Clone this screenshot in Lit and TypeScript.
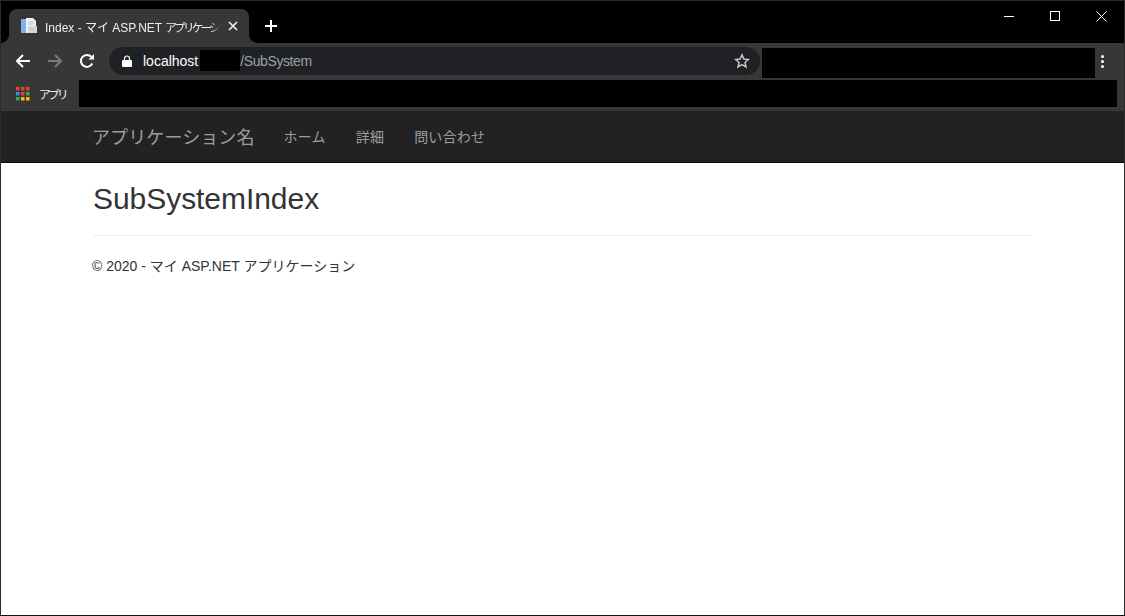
import { LitElement, html, svg, css } from "lit";
import { customElement } from "lit/decorators.js";

const APP_COLORS = ["#ea4335", "#ea4335", "#ea4335", "#4285f4", "#ea4335", "#34a853", "#34a853", "#fbbc04", "#fbbc04"];

@customElement("app-root")
export class AppRoot extends LitElement {
  static styles = css`
    :host { display: block; width: 1125px; height: 616px; overflow: hidden; font-family: "Liberation Sans", "Noto Sans CJK JP", sans-serif; }
    * { box-sizing: border-box; }
    .window { width: 1125px; height: 616px; border: 1px solid #2b2b2b; border-bottom-color: #111; display: flex; flex-direction: column; background: #fff; }
    .titlebar { height: 42px; background: #000; display: flex; align-items: flex-end; padding-left: 8px; position: relative; flex: none; }
    .tab { width: 240px; height: 34px; background: #373737; border-radius: 8px 8px 0 0; display: flex; align-items: center; padding: 0 0 0 12px; position: relative; }
    .tab::before, .tab::after { content: ""; position: absolute; bottom: 0; width: 8px; height: 8px; background: radial-gradient(circle at var(--c) 0, #000 7.5px, #373737 8px); }
    .tab::before { left: -8px; --c: 0; }
    .tab::after { right: -8px; --c: 100%; }
    .favicon { width: 16px; height: 16px; flex: none; margin-right: 8px; }
    .tabtitle { color: #eee; font-size: 12px; width: 175px; white-space: nowrap; overflow: hidden; flex: none; -webkit-mask-image: linear-gradient(to right, #000 94%, transparent); mask-image: linear-gradient(to right, #000 94%, transparent); }
    .narrow { font-size: 11.500px; letter-spacing: -2.700px; }
    .tabclose { width: 10px; height: 10px; margin-left: 8px; flex: none; }
    .newtab { margin: 0 0 9px 15px; width: 14px; height: 14px; align-self: flex-end; position: relative; top: -1px; }
    .controls { position: absolute; top: 0; right: 0; display: flex; }
    .ctl { width: 46px; height: 30px; display: flex; align-items: center; justify-content: center; }
    .toolbar { height: 35px; background: #373737; display: flex; align-items: center; flex: none; padding: 0 0 0 14px; }
    .toolbar .nav { width: 16px; height: 16px; flex: none; }
    .toolbar .g { margin-left: 16px; }
    .omnibox { margin-left: 14px; width: 651px; height: 28px; background: #202124; border-radius: 14px; display: flex; align-items: center; padding: 0 10px 0 13px; font-size: 14px; flex: none; }
    .lock { width: 10px; height: 12px; flex: none; margin-right: 11px; }
    .host { color: #fff; }
    .mask { width: 40px; height: 21px; background: #000; flex: none; margin-left: 2px; }
    .path { color: #9aa0a6; letter-spacing: -.4px; }
    .star { margin-left: auto; width: 16px; height: 16px; flex: none; }
    .redact1 { margin: 4px 0 0 2px; width: 333px; height: 30px; background: #000; flex: none; }
    .menu { margin: 2px 0 0 0; width: 14px; display: flex; flex-direction: column; align-items: center; gap: 2px; }
    .menu i { width: 3px; height: 3px; background: #fff; border-radius: 50%; display: block; }
    .bookmarks { height: 33px; background: #373737; display: flex; align-items: center; flex: none; padding: 0 7px 0 15px; }
    .apps { width: 14px; height: 14px; flex: none; margin-top: -1px; }
    .bmlabel { color: #eee; font-size: 11.500px; letter-spacing: -2.500px; margin-left: 9px; width: 40px; flex: none; white-space: nowrap; margin-top: -1px; }
    .redact2 { flex: 1; height: 27px; background: #000; margin-top: -3px; }
    .navbar { height: 52px; background: #222; border-bottom: 1px solid #080808; flex: none; padding: 0 0 2px 91px; display: flex; align-items: center; }
    .brand { color: #9d9d9d; font-size: 18px; letter-spacing: .1px; margin-right: 29px; white-space: nowrap; }
    .links { display: flex; gap: 30px; color: #9d9d9d; font-size: 14px; letter-spacing: .2px; }
    .page { padding: 0 92px; color: #333; flex: 1; }
    h2 { font-weight: 400; font-size: 30px; letter-spacing: -.05px; line-height: 33px; margin: 19px 0 10px; color: #333; }
    hr { border: 0; border-top: 1px solid #eee; margin: 20px 0 0; }
    footer { font-size: 14px; line-height: 20px; margin: 20px 0 0 -1px; color: #333; }
  `;

  render() {
    return html`
      <div class="window">
        <div class="titlebar">
          <div class="tab">
            <svg class="favicon" viewBox="0 0 16 16">
              <path d="M0 1h5v14H0z" fill="#7db4e6"/>
              <path d="M5 0h7l3 3v12H5z" fill="#f1f3f5"/>
              <path d="M7 8h9v7H7z" fill="#d4d8dc"/>
              <path d="M7 4h6M7 6h6M9 11h5" stroke="#b9c0c6"/>
            </svg>
            <span class="tabtitle">Index - マイ ASP.NET <span class="narrow">アプリケーション</span></span>
            <svg class="tabclose" viewBox="0 0 10 10"><path d="M1 1l8 8M9 1l-8 8" stroke="#eee" stroke-width="1.7"/></svg>
          </div>
          <svg class="newtab" viewBox="0 0 14 14"><path d="M7 1v12M1 7h12" stroke="#fff" stroke-width="2"/></svg>
          <div class="controls">
            <div class="ctl"><svg width="10" height="10" viewBox="0 0 10 10"><path d="M0 5.500h10" stroke="#fff"/></svg></div>
            <div class="ctl"><svg width="10" height="10" viewBox="0 0 10 10"><rect x=".5" y=".5" width="9" height="9" fill="none" stroke="#fff"/></svg></div>
            <div class="ctl"><svg width="11" height="11" viewBox="0 0 11 11"><path d="M.5.5l10 10M10.500.5l-10 10" stroke="#fff"/></svg></div>
          </div>
        </div>
        <div class="toolbar">
          <svg class="nav" viewBox="0 0 16 16"><path d="M15 8H2M8 2L2 8l6 6" fill="none" stroke="#fff" stroke-width="2"/></svg>
          <svg class="nav g" viewBox="0 0 16 16"><path d="M1 8h13M8 2l6 6-6 6" fill="none" stroke="#7b7b7b" stroke-width="2"/></svg>
          <svg class="nav g" viewBox="0 0 16 16"><path d="M13.300 10.500A6 6 0 1 1 12.300 3.800" fill="none" stroke="#fff" stroke-width="2"/><path d="M9.500 6.500H15V1z" fill="#fff"/></svg>
          <div class="omnibox">
            <svg class="lock" viewBox="0 0 10 12"><path d="M1 5h8a1 1 0 0 1 1 1v5a1 1 0 0 1-1 1H1a1 1 0 0 1-1-1V6a1 1 0 0 1 1-1z" fill="#fff"/><path d="M2.500 5V3.500a2.500 2.500 0 0 1 5 0V5" fill="none" stroke="#fff" stroke-width="1.200"/></svg>
            <span class="host">localhost</span><span class="mask"></span><span class="path">/SubSystem</span>
            <svg class="star" viewBox="0 0 16 16"><path d="M8 1.800l1.900 4.200 4.500.5-3.400 3 1 4.500L8 11.700 4 14l1-4.500-3.400-3 4.500-.5z" fill="none" stroke="#c4c7c5" stroke-width="1.500"/></svg>
          </div>
          <div class="redact1"></div>
          <div class="menu"><i></i><i></i><i></i></div>
        </div>
        <div class="bookmarks">
          <svg class="apps" viewBox="0 0 14 14">
            ${APP_COLORS.map((c, i) => svg`<rect x=${(i % 3) * 5} y=${Math.floor(i / 3) * 5} width="3.500" height="3.500" fill=${c}></rect>`)}
          </svg>
          <span class="bmlabel">アプリ</span>
          <div class="redact2"></div>
        </div>
        <div class="navbar">
          <span class="brand">アプリケーション名</span>
          <div class="links"><span>ホーム</span><span>詳細</span><span>問い合わせ</span></div>
        </div>
        <div class="page">
          <h2>SubSystemIndex</h2>
          <hr />
          <footer>© 2020 - マイ ASP.NET アプリケーション</footer>
        </div>
      </div>
    `;
  }
}
